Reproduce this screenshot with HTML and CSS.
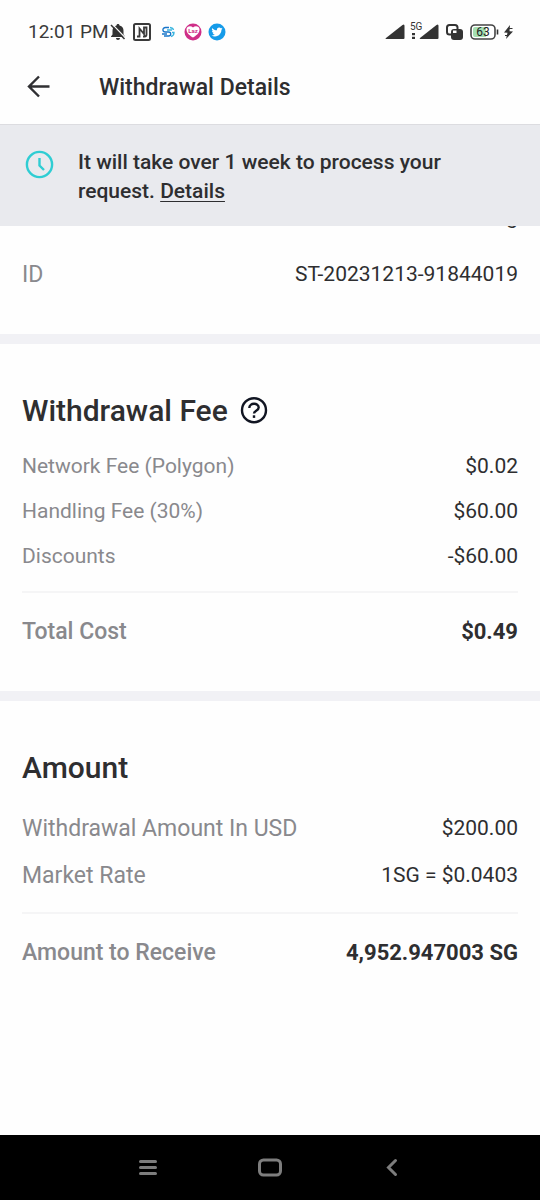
FILE: index.html
```html
<!DOCTYPE html>
<html lang="en">
<head>
<meta charset="utf-8">
<meta name="viewport" content="width=device-width, initial-scale=1">
<title>Withdrawal Details</title>
<link rel="stylesheet" href="styles.css">
</head>
<body>
<div class="statusbar">
  <div class="status-left">
    <span class="time">12:01 PM</span>
    <svg width="16" height="18" viewBox="0 0 16 18" aria-hidden="true"><path d="M8 1c1 0 1.500.7 1.500 1.500C12.500 3.200 13.500 5.300 13.500 8v3.500l1.500 2V14H1v-.5l1.500-2V8c0-2.700 1-4.800 4-5.500C6.500 1.700 7 1 8 1zM6 15h4c0 1.200-.8 2-2 2s-2-.8-2-2z" fill="#333"/><path d="M2.500 1.500 15.500 15" stroke="#fefefe" stroke-width="1.200"/><path d="M1 2 14.500 16" stroke="#333" stroke-width="1.500"/></svg>
    <svg class="nfc" width="18" height="18" viewBox="0 0 18 18" fill="none" stroke="#3a3a3a" aria-hidden="true"><rect x="1" y="1" width="16" height="16" rx="1.500" stroke-width="2"/><path d="M4 13.500h2.500V5.500L11 11V4.500h2.500v7q0 2-2 2H10" stroke-width="1.800"/></svg>
    <svg class="coin" width="14" height="12" viewBox="0 0 14 12" fill="none" stroke-width="1.300" aria-hidden="true"><path d="M8 1.500H4.500c-3.500 0-3.500 4.500 0 4.500h3c3 0 3 4 0 4H3M1 8h5" stroke="#1976c9"/><path d="M9 1.500c2 .3 3.300 1.200 3.500 2.500M6 4h5M11 6.500h2c0 2.500-1 3.500-3 4" stroke="#39b5df"/></svg>
    <svg class="laz" width="18" height="18" viewBox="0 0 18 18" aria-hidden="true"><circle cx="9" cy="9" r="8.500" fill="#cf2e88"/><path d="M9 4.500c2-2 6.500-1.500 6.500 2 0 4-4 6.500-6.500 8-2.500-1.500-6.500-4-6.500-8 0-3.500 4.500-4 6.500-2z" fill="#fff"/><text x="9" y="10" text-anchor="middle" class="laz-text">Laz</text></svg>
    <svg class="bird" width="18" height="18" viewBox="0 0 18 18" aria-hidden="true"><circle cx="9" cy="9" r="8.500" fill="#159be9"/><path transform="translate(3.500 3.500) scale(.46)" fill="#fff" d="M23.950 4.570a10 10 0 0 1-2.820.77 4.960 4.960 0 0 0 2.160-2.720c-.95.550-2 .95-3.120 1.180a4.920 4.920 0 0 0-8.380 4.480C7.690 8.090 4.070 6.130 1.640 3.160a4.920 4.920 0 0 0 1.520 6.570 4.900 4.900 0 0 1-2.230-.610v.06a4.920 4.920 0 0 0 3.950 4.820 5 5 0 0 1-2.210.09 4.940 4.940 0 0 0 4.600 3.420A9.870 9.870 0 0 1 0 19.540a13.990 13.990 0 0 0 7.550 2.210c9.050 0 14-7.500 14-13.980 0-.210 0-.420-.020-.630a9.940 9.940 0 0 0 2.420-2.570z"/></svg>
  </div>
  <div class="status-right">
    <svg width="20" height="16" viewBox="0 0 20 16" aria-hidden="true"><path d="M1 14 17.500 1q2-1.500 2 1V14q0 1-1 1H1.500q-1.500 0-.5-1z" fill="#333"/></svg>
    <svg width="29" height="20" viewBox="0 0 29 20" aria-hidden="true"><path d="M10 16 26.500 3q2-1.500 2 1V16q0 1-1 1H10.500q-1.500 0-.5-1z" fill="#333"/><path d="M2 11h3v2.200H2zM2 14.800h3V17H2z" fill="#333"/><text x="0" y="8" class="net-text">5G</text></svg>
    <svg class="clone" width="17" height="16" viewBox="0 0 17 16" aria-hidden="true"><rect x="1" y="1" width="10.500" height="9.500" rx="2.500" fill="none" stroke="#333" stroke-width="2"/><rect x="5" y="5" width="12" height="11" rx="3" fill="#333"/><path d="M7 6.500h3.500V9H7z" fill="#fefefe"/></svg>
    <svg class="battery" width="29" height="16" viewBox="0 0 29 16" aria-hidden="true"><rect x="1" y="1" width="24" height="14" rx="4" fill="#fff" stroke="#444" stroke-width="1.600"/><path d="M5 3h11v10H5q-2 0-2-2V5q0-2 2-2z" fill="#a5dfb2"/><path d="M27.500 5.500v5" stroke="#333" stroke-width="1.600"/><text x="13" y="12" text-anchor="middle" class="battery-text">63</text></svg>
    <svg class="bolt" width="9" height="16" viewBox="0 0 9 16" aria-hidden="true"><path d="M6 1 0 8.500l3.500.3L2 15l7-7.500-3.500-.3z" fill="#333"/><path d="M1 11.500h3M5 4.500h3.500" stroke="#333"/></svg>
  </div>
</div>

<header class="header">
  <button class="back" aria-label="Back"><svg width="24" height="24" viewBox="0 0 24 24" fill="none" stroke="#303033" stroke-width="2.400"><path d="M22.500 11.500H2.500M12 1.500 2 11.500l10 10"/></svg></button>
  <h1>Withdrawal Details</h1>
</header>

<div class="notice">
  <svg width="30" height="30" viewBox="0 0 30 30" fill="none" stroke="#2fcdd3" stroke-width="2.400" aria-hidden="true"><circle cx="15.500" cy="14.500" r="12.600"/><path d="M15.500 8v7.500l4.500 4.500"/></svg>
  <p>It will take over 1 week to process your request. <a href="#details">Details</a></p>
</div>

<main>
  <section class="identity">
    <div class="scrolled"><span>g</span></div>
    <dl><div class="row"><dt>ID</dt><dd>ST-20231213-91844019</dd></div></dl>
  </section>

  <section class="fee" id="details">
    <div class="heading">
      <h2>Withdrawal Fee</h2>
      <button class="help" aria-label="About the withdrawal fee"><svg width="28" height="28" viewBox="0 0 28 28" fill="none" stroke="#111522" stroke-width="2.400"><circle cx="14" cy="13.200" r="12"/><path d="M9.300 11C9.300 5.500 18.700 5.500 18.700 10.500c0 3.500-4.700 3-4.700 6"/><path d="M14 18.300v2.600"/></svg></button>
    </div>
    <dl>
      <div class="row"><dt>Network Fee (Polygon)</dt><dd>$0.02</dd></div>
      <div class="row"><dt>Handling Fee (30%)</dt><dd>$60.00</dd></div>
      <div class="row"><dt>Discounts</dt><dd>-$60.00</dd></div>
      <div class="row total"><dt>Total Cost</dt><dd>$0.49</dd></div>
    </dl>
  </section>

  <section class="amount">
    <div class="heading"><h2>Amount</h2></div>
    <dl>
      <div class="row"><dt>Withdrawal Amount In USD</dt><dd>$200.00</dd></div>
      <div class="row"><dt>Market Rate</dt><dd>1SG = $0.0403</dd></div>
      <div class="row total"><dt>Amount to Receive</dt><dd>4,952.947003 SG</dd></div>
    </dl>
  </section>
</main>

<nav class="navbar" aria-label="System">
  <button aria-label="Recent apps"><svg width="26" height="26" viewBox="0 0 26 26" stroke="#7d7d7d" stroke-width="3" stroke-linecap="round"><path d="M5.500 6.500h15M5.500 12.500h15M5.500 18.500h15"/></svg></button>
  <button aria-label="Home"><svg width="26" height="26" viewBox="0 0 26 26" fill="none" stroke="#7d7d7d" stroke-width="3"><rect x="2.500" y="5" width="21" height="15" rx="4"/></svg></button>
  <button aria-label="Back"><svg width="26" height="26" viewBox="0 0 26 26" fill="none" stroke="#7d7d7d" stroke-width="3" stroke-linecap="round"><path d="M16.500 5.500 9.500 12.500l7 7"/></svg></button>
</nav>
</body>
</html>
```
FILE: styles.css
```css
* { box-sizing: border-box; }

body {
  margin: 0;
  min-height: 100vh;
  display: flex;
  flex-direction: column;
  background: #fefefe;
  color: #2e2e30;
  font-family: Roboto, "Liberation Sans", sans-serif;
  font-size: 21px;
  line-height: 29px;
}

h1, h2, p, dl, dd { margin: 0; }
svg { display: block; flex: none; }
button { padding: 0; border: 0; background: none; color: inherit; font: inherit; cursor: pointer; }

.statusbar {
  display: flex;
  justify-content: space-between;
  align-items: center;
  height: 50px;
  padding: 14px 27px 0 28px;
}
.status-left, .status-right { display: flex; align-items: center; }
.status-left { gap: 6px; }
.status-right { gap: 5px; }
.time { margin-right: -5px; font-size: 19px; line-height: 22px; color: #3a3a3a; }
.nfc { margin-left: 1px; }
.coin { margin-left: 4px; }
.laz { margin-left: 3px; }
.clone, .battery { margin-left: 2px; }
.laz-text { font-size: 6px; font-weight: 700; fill: #cf2e88; }
.net-text { font-size: 10px; fill: #333; }
.battery-text { font-size: 12px; fill: #222; }

.header {
  display: flex;
  align-items: center;
  gap: 48px;
  height: 75px;
  padding: 0 27px;
  border-bottom: 1px solid #dcdce0;
}
.header h1 { font-size: 23px; line-height: 29px; font-weight: 500; }

.notice {
  display: flex;
  gap: 24px;
  padding: 23px 24px 20px;
  background: #e9eaee;
  font-weight: 500;
}
.notice svg { margin-top: 2px; }
.notice p { max-width: 390px; }
.notice a { color: inherit; text-underline-offset: 3px; text-decoration-thickness: 1px; }

main { flex: 1; }
section { padding: 0 22px; }
section + section { border-top: 10px solid #f1f1f5; }

.identity { padding-bottom: 45px; }
.scrolled {
  display: flex;
  justify-content: flex-end;
  align-items: flex-end;
  height: 2px;
  margin-bottom: 32px;
  overflow: hidden;
  line-height: 21px;
}
.fee { padding-top: 47px; padding-bottom: 45px; }
.amount { padding-top: 47px; }

.heading { display: flex; align-items: center; gap: 12px; }
.heading h2 { font-size: 30px; line-height: 40px; font-weight: 500; }
.fee .heading { margin-bottom: 21px; }
.amount .heading { margin-bottom: 26px; }

dl { display: flex; flex-direction: column; gap: 16px; }
.amount dl { gap: 18px; }
.row { display: flex; justify-content: space-between; align-items: center; gap: 16px; }
dt { color: #89898d; }
dd { text-align: right; }
.identity dt, .amount dt, .total dt { font-size: 23px; }
.total { margin-top: 4px; padding-top: 24px; border-top: 2px solid #f5f5f6; }
.total dt { font-weight: 500; }
.total dd { font-size: 22px; font-weight: 700; }

.navbar {
  display: flex;
  justify-content: center;
  align-items: center;
  gap: 96px;
  height: 65px;
  background: #000;
}
```
